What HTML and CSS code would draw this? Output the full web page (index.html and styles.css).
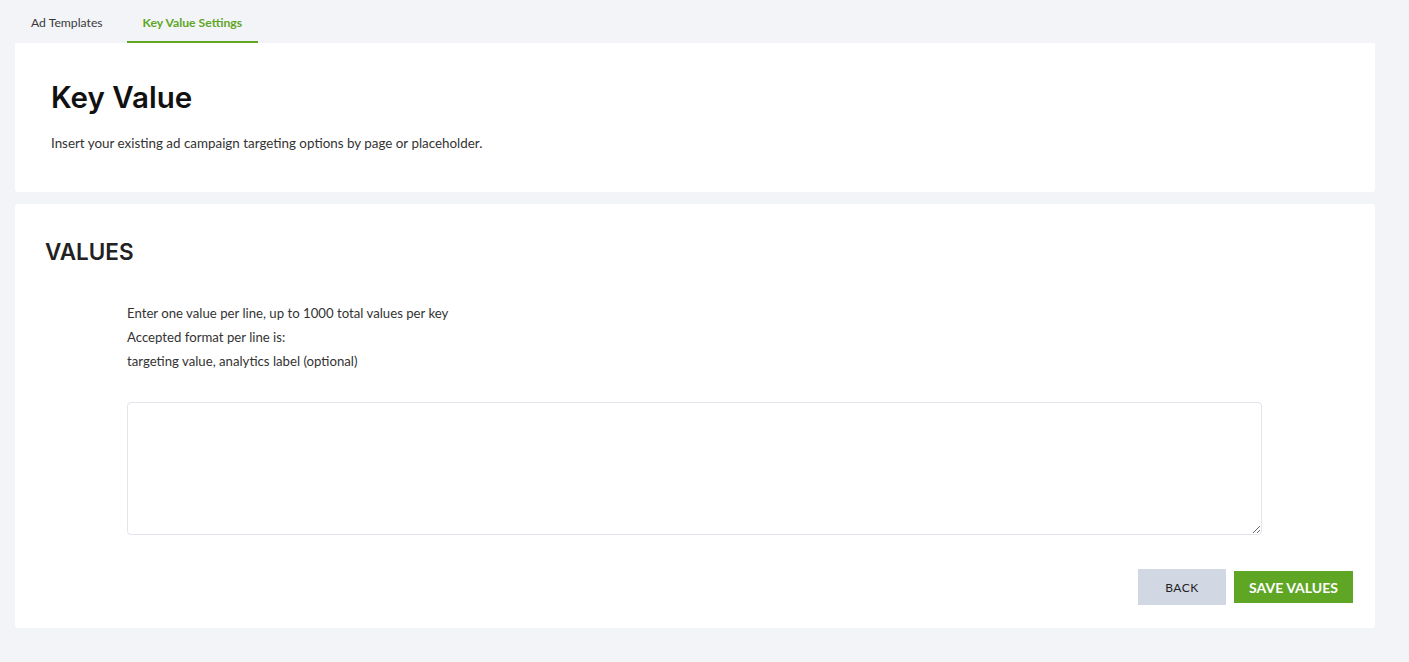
FILE: index.html
```html
<!DOCTYPE html>
<html lang="en">
  <head>
    <meta charset="UTF-8" />
    <title>Key Value Settings</title>
    <link rel="stylesheet" href="styles.css">
  </head>
  <body>
    <div class="page">
      <nav class="tabs">
        <a class="tab">Ad Templates</a>
        <a class="tab tab-active">Key Value Settings</a>
      </nav>

      <div class="card card-header">
        <h1 class="page-title">Key Value</h1>
        <p class="page-subtitle">Insert your existing ad campaign targeting options by page or placeholder.</p>
      </div>

      <div class="card card-values">
        <h2 class="section-title">VALUES</h2>
        <div class="values-body">
          <div class="values-help">
            <p>Enter one value per line, up to 1000 total values per key</p>
            <p>Accepted format per line is:</p>
            <p>targeting value, analytics label (optional)</p>
          </div>
          <textarea class="values-input"></textarea>
        </div>
        <div class="actions">
          <button class="btn btn-back">BACK</button>
          <button class="btn btn-save">SAVE VALUES</button>
        </div>
      </div>
    </div>
  </body>
</html>
```

FILE: styles.css
```css
body {
  margin: 0;
  background-color: #f3f4f7;
  font-family: "Lato", "Open Sans", sans-serif;
  color: #333;
}

.page {
  padding: 0 34px 0 15px;
}

.tabs {
  display: flex;
  height: 43px;
}

.tab {
  display: flex;
  align-items: center;
  padding: 3px 16px 0;
  font-size: 12.2px;
  color: #3a3a3a;
  cursor: pointer;
  box-sizing: border-box;
  border-bottom: 2px solid transparent;
}

.tab-active {
  color: #5ea624;
  font-weight: 700;
  border-bottom-color: #5ea624;
  margin-left: 8px;
}

.card {
  background-color: #ffffff;
  border-radius: 0 0 3px 3px;
}

.card-header {
  padding: 36px 36px 40px;
  height: 149px;
  box-sizing: border-box;
}

.page-title {
  font-family: "Inter", "Roboto", sans-serif;
  font-size: 29.5px;
  font-weight: 600;
  color: #111;
  margin: 0 0 20px;
  line-height: 36px;
}

.page-subtitle {
  margin: 0;
  font-size: 13.4px;
  color: #333;
}

.card-values {
  margin-top: 12px;
  border-radius: 3px;
  padding: 33px 22px 26px 31px;
  height: 424px;
  box-sizing: border-box;
}

.section-title {
  font-family: "Inter", "Roboto", sans-serif;
  font-size: 22.5px;
  font-weight: 600;
  color: #222;
  margin: 0 0 0 -1px;
  line-height: 30px;
}

.values-body {
  padding: 34px 91px 0 81px;
}

.values-help p {
  margin: 0;
  font-size: 13.2px;
  line-height: 24px;
  color: #333;
}

.values-input {
  display: block;
  width: 100%;
  height: 133px;
  margin-top: 29px;
  box-sizing: border-box;
  border: 1px solid #e1e4ea;
  border-radius: 4px;
  resize: vertical;
}

.actions {
  display: flex;
  justify-content: flex-end;
  align-items: center;
  gap: 8px;
  margin-top: 34px;
}

.btn {
  border: none;
  cursor: pointer;
  font-family: "Lato", "Open Sans", sans-serif;
}

.btn-back {
  width: 88px;
  height: 36px;
  background-color: #d1d7e3;
  color: #222;
  font-size: 12px;
  letter-spacing: 0.5px;
}

.btn-save {
  width: 119px;
  height: 32px;
  background-color: #5ea624;
  color: #ffffff;
  font-size: 14px;
  font-weight: 700;
}
```
